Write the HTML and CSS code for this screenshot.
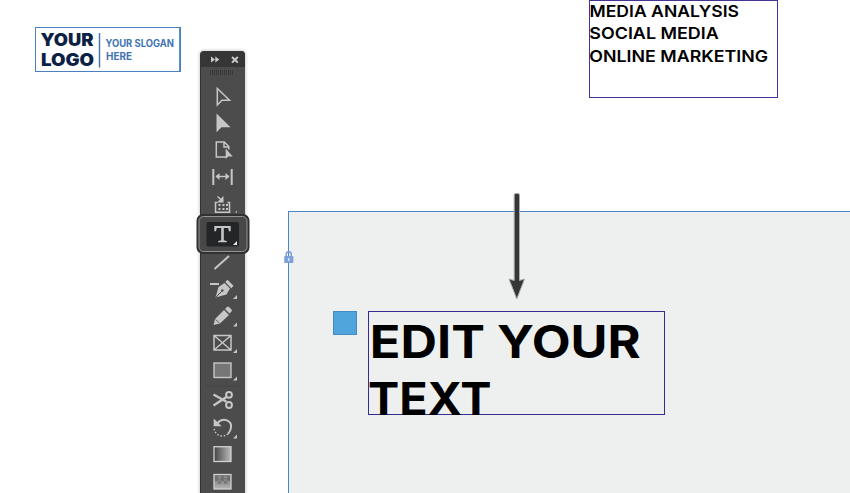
FILE: index.html
```
<!DOCTYPE html>
<html lang="en">
<head>
<meta charset="utf-8">
<title>Layout editor</title>
<link rel="stylesheet" href="styles.css">
</head>
<body>
<main class="pasteboard">
  <section class="logo-frame">
    <svg width="146" height="46" viewBox="35 27 146 46">
      <g class="logo-name"><text x="40.5" y="46.3" textLength="53" lengthAdjust="spacingAndGlyphs">YOUR</text><text x="41" y="66.4" textLength="53" lengthAdjust="spacingAndGlyphs">LOGO</text></g>
      <path class="logo-rule" d="M99.500 33V67.500"/>
      <g class="slogan"><text x="105.500" y="47" textLength="68.500" lengthAdjust="spacingAndGlyphs">YOUR SLOGAN</text><text x="106" y="60" textLength="26" lengthAdjust="spacingAndGlyphs">HERE</text></g>
    </svg>
  </section>

  <section class="services-frame">
    <svg width="189" height="99" viewBox="589 0 189 99">
      <text x="589.500" y="16.800" textLength="149.500" lengthAdjust="spacingAndGlyphs">MEDIA ANALYSIS</text>
      <text x="589.300" y="39.300" textLength="129.500" lengthAdjust="spacingAndGlyphs">SOCIAL MEDIA</text>
      <text x="589.300" y="61.800" textLength="178.800" lengthAdjust="spacingAndGlyphs">ONLINE MARKETING</text>
    </svg>
  </section>

  <section class="page"></section>
  <svg class="lock" width="12" height="14" viewBox="283 250 12 14"><path d="M286.200 257v-2.800a2.500 2.500 0 0 1 5 0v2.800" fill="none" stroke="#7f9fdd" stroke-width="1.500"/><rect x="284.200" y="256" width="9.200" height="7" rx=".8" fill="#7f9fdd"/><path d="M288.800 258v3" stroke="#e5ebf7" stroke-width="1.300"/></svg>
  <div class="swatch"></div>
  <section class="title-frame">
    <svg width="297" height="120" viewBox="368 311 297 120">
      <text x="369.800" y="357.700" textLength="271" lengthAdjust="spacingAndGlyphs">EDIT YOUR</text>
      <text x="368" y="415" textLength="123.500" lengthAdjust="spacingAndGlyphs">TEXT</text>
    </svg>
  </section>
  <svg class="pointer" width="22" height="112" viewBox="506 190 22 112"><path d="M514.200 195q0-1.500 1.500-1.500h2.300q1.500 0 1.500 1.500v85.500l5-1.500-7.700 20-7.800-20 5.200 1.500z" fill="#353637" stroke="#aaa" stroke-width="1"/><path d="M515.200 196v86l-4.500-1.300 6 15.300 6.200-15.300-4.500 1.300v-86z" fill="#353637"/></svg>

  <aside class="toolbar">
    <header class="toolbar-head"><svg width="44" height="16" viewBox="201 51 44 16"><path d="M211 56.500l4 3-4 3zm4.300 0l4 3-4 3z" fill="#ccc"/><path d="M232 57l5.800 5.600m0-5.600l-5.800 5.600" stroke="#ccc" stroke-width="2"/></svg></header>
    <div class="grip"></div>
    <svg class="tool" viewBox="201 83 44 27.500"><path d="M217.300 88.500V105l4.700-4.800h7.500z" class="line"/></svg>
    <svg class="tool" viewBox="201 110.500 44 27.500"><path d="M216.500 114v18.700l5-5h9z" class="solid"/></svg>
    <svg class="tool" viewBox="201 138 44 27.500"><path d="M226.300 157h-10v-15h8l4.500 4.500v3M224 142v5h5" class="line"/><path d="M225.700 148.500v10.500l2.500-2.500h4.500z" class="solid"/></svg>
    <svg class="tool" viewBox="201 165.500 44 27.500"><path d="M213.300 169.500v16M231.700 169.500v16" class="line thick"/><path d="M216 177h13" class="line"/><path d="M215.500 177l4-3.500v7zm14 0l-4-3.500v7z" class="solid"/></svg>
    <svg class="tool" viewBox="201 193 44 27.500"><path d="M217.500 202.500h-2v9.700h14v-9.700h-2" class="line"/><path d="M217.500 196.500l4.500 4" class="line"/><path d="M223.500 196v6.500h-6.500zM218.500 204h2v2h-2zm4 0h2v2h-2zm3.500 0h2v2h-2zm-7.500 4h2v2h-2zm4 0h2v2h-2zm3.500 0h2v2h-2z" class="solid"/><path d="M237 210.500v2h-2z" class="solid"/></svg>
    <svg class="tool selected" viewBox="201 220.500 44 27.500"><rect x="196.500" y="214.500" width="53" height="40" rx="6.500" fill="#303132"/><rect x="199" y="217" width="48" height="35" rx="4.500" fill="#484849" stroke="#949494" stroke-width="1"/><rect x="206.500" y="222.500" width="32.500" height="24.500" rx="2" fill="#242526"/><path d="M214.300 226.500h16.400v5.300h-1.700l-.8-3.200h-4.400v12.200l3 .6v1.300h-8.600v-1.300l3-.6v-12.200h-4.400l-.8 3.200h-1.700z" class="solid"/><path d="M237 241.500v4h-4z" fill="#eee"/></svg>
    <svg class="tool" viewBox="201 248 44 27.500"><path d="M214.500 269l14.500-13" class="line thick"/></svg>
    <svg class="tool" viewBox="201 275.500 44 27.500"><path d="M210 284.500h9" class="line thick"/><path d="M215.500 298l3-10.500 6-4 5.500 5.500-3.500 6z" class="solid"/><path d="M225.300 282.500l2.200-2.300 6 6-2.300 2.500z" class="solid"/><path d="M216 297.500l6-6" stroke="#4c4c4d"/><circle cx="222.300" cy="291" r="1.200" fill="#4c4c4d"/><path d="M237 295.500v4h-4z" class="solid"/></svg>
    <svg class="tool" viewBox="201 303 44 27.500"><path d="M213.500 325l1.500-6 9-9 5 5-9 8.500zM225 309l2-2q1-1 2 0l2.500 2.500q1 1 0 2l-2 2z" class="solid"/><path d="M215.500 319.500l4 3.500" stroke="#4c4c4d" stroke-width=".8"/><path d="M237 322.500v4h-4z" class="solid"/></svg>
    <svg class="tool" viewBox="201 330.500 44 27.500"><path d="M214 336h17v14.500h-17zl17 14.500m0-14.500l-17 14.500" class="line"/><path d="M237 349.500v4h-4z" class="solid"/></svg>
    <svg class="tool" viewBox="201 358 44 27.500"><rect x="214" y="363" width="17" height="14.500" fill="#777" stroke="#c6c6c6" stroke-width="1.400"/><path d="M237 376.500v4h-4z" class="solid"/></svg>
    <svg class="tool" viewBox="201 385.500 44 27.500"><path d="M205 386.500h36" stroke="#454546"/><path d="M213.500 395l13 7.300M213.500 406l13-8.500" class="line blade"/><circle cx="229" cy="395.300" r="2.900" class="line thick"/><circle cx="229" cy="405.500" r="2.900" class="line thick"/></svg>
    <svg class="tool" viewBox="201 413 44 27.500"><path d="M217 423.500c7-8 15-1.500 14 4q-.5 4-3 6.300" class="line thick"/><path d="M228 433.800c-6 5-14 1-14-7" class="line" stroke-dasharray="1.500 1.800"/><path d="M213.700 418.500v7.700h8z" class="solid"/><path d="M237 434.500v4h-4z" class="solid"/></svg>
    <svg class="tool" viewBox="201 440.500 44 27.500"><defs><linearGradient id="fade"><stop stop-color="#444"/><stop offset="1" stop-color="#bbb"/></linearGradient></defs><rect x="214" y="447.200" width="17" height="14.800" fill="url(#fade)" stroke="#d0d0d0" stroke-width="1.300"/></svg>
    <svg class="tool" viewBox="201 468 44 27.500"><defs><linearGradient id="feather" x2="0" y2="1"><stop stop-color="#666"/><stop offset="1" stop-color="#b5b5b5"/></linearGradient></defs><rect x="214" y="474.500" width="17" height="14.500" fill="url(#feather)" stroke="#d0d0d0" stroke-width="1.300"/><path d="M215 478h3v3h-3zm6 0h3v3h-3zm6 0h3v3h-3zm-9 3h3v3h-3zm6 0h3v3h-3z" fill="#555" opacity=".4"/><path d="M218 475.500h3v2.500h-3zm6 0h3v2.500h-3z" fill="#999" opacity=".5"/></svg>
  </aside>
</main>
</body>
</html>
```
FILE: styles.css
```
body {
  margin: 0;
  background: #fff;
  font-family: Inter, "Liberation Sans", sans-serif;
}
.pasteboard {
  position: relative;
  width: 850px;
  height: 493px;
  overflow: hidden;
}
svg {
  display: block;
}
.logo-frame, .services-frame, .title-frame, .page, .swatch, .lock, .pointer, .toolbar {
  position: absolute;
}
.logo-frame {
  left: 35px;
  top: 27px;
  box-shadow: inset 0 0 0 1px #4c7fc2, inset -2px 0 #5b91d3;
  height: 45px;
  width: 146px;
}
.logo-name {
  font-size: 17px;
  font-weight: 900;
  fill: #0d2145;
}
.logo-rule {
  stroke: #4778b2;
  stroke-width: 1.5;
}
.slogan {
  font-size: 9.7px;
  font-weight: 700;
  fill: #3f74b4;
}
.services-frame {
  left: 589px;
  top: 0;
  width: 189px;
  height: 98px;
  box-shadow: inset 0 0 0 1px #433394;
  font-size: 16.2px;
  font-weight: 600;
}
.page {
  left: 288px;
  top: 211px;
  width: 580px;
  height: 300px;
  box-sizing: border-box;
  border: 1px solid #4d85cb;
  background: #eef0f0;
}
.lock {
  left: 283px;
  top: 250px;
}
.swatch {
  left: 333px;
  top: 311px;
  width: 24px;
  height: 24px;
  box-sizing: border-box;
  border: 1px solid #4589c5;
  background: #50a5dc;
}
.title-frame {
  left: 368px;
  top: 311px;
  width: 297px;
  height: 104px;
  box-shadow: inset 0 0 0 1px #342c91;
  font-size: 45px;
  font-weight: 700;
}
.pointer {
  left: 506px;
  top: 190px;
}
.toolbar {
  left: 200px;
  top: 51px;
  width: 44px;
  height: 445px;
  border-left: 1px solid #343435;
  border-radius: 4px 4px 0 0;
  background: #4c4c4d;
  box-shadow: 0 0 3px 1px #d5d5d5;
}
.toolbar-head {
  height: 16px;
  border-radius: 4px 4px 0 0;
  background: #363637;
}
.grip {
  width: 23px;
  height: 5px;
  margin: 3px auto 7.5px 9px;
  background: repeating-linear-gradient(90deg, #39393a 0 1px, #4c4c4d 1px 2px);
}
.tool {
  width: 44px;
  height: 27.5px;
  overflow: visible;
}
.selected {
  position: relative;
  z-index: 1;
}
.line {
  fill: none;
  stroke: #c6c6c6;
  stroke-width: 1.5;
}
.line.thick {
  stroke-width: 2;
}
.line.blade {
  stroke-width: 2.3;
}
.solid {
  fill: #c6c6c6;
}
```
